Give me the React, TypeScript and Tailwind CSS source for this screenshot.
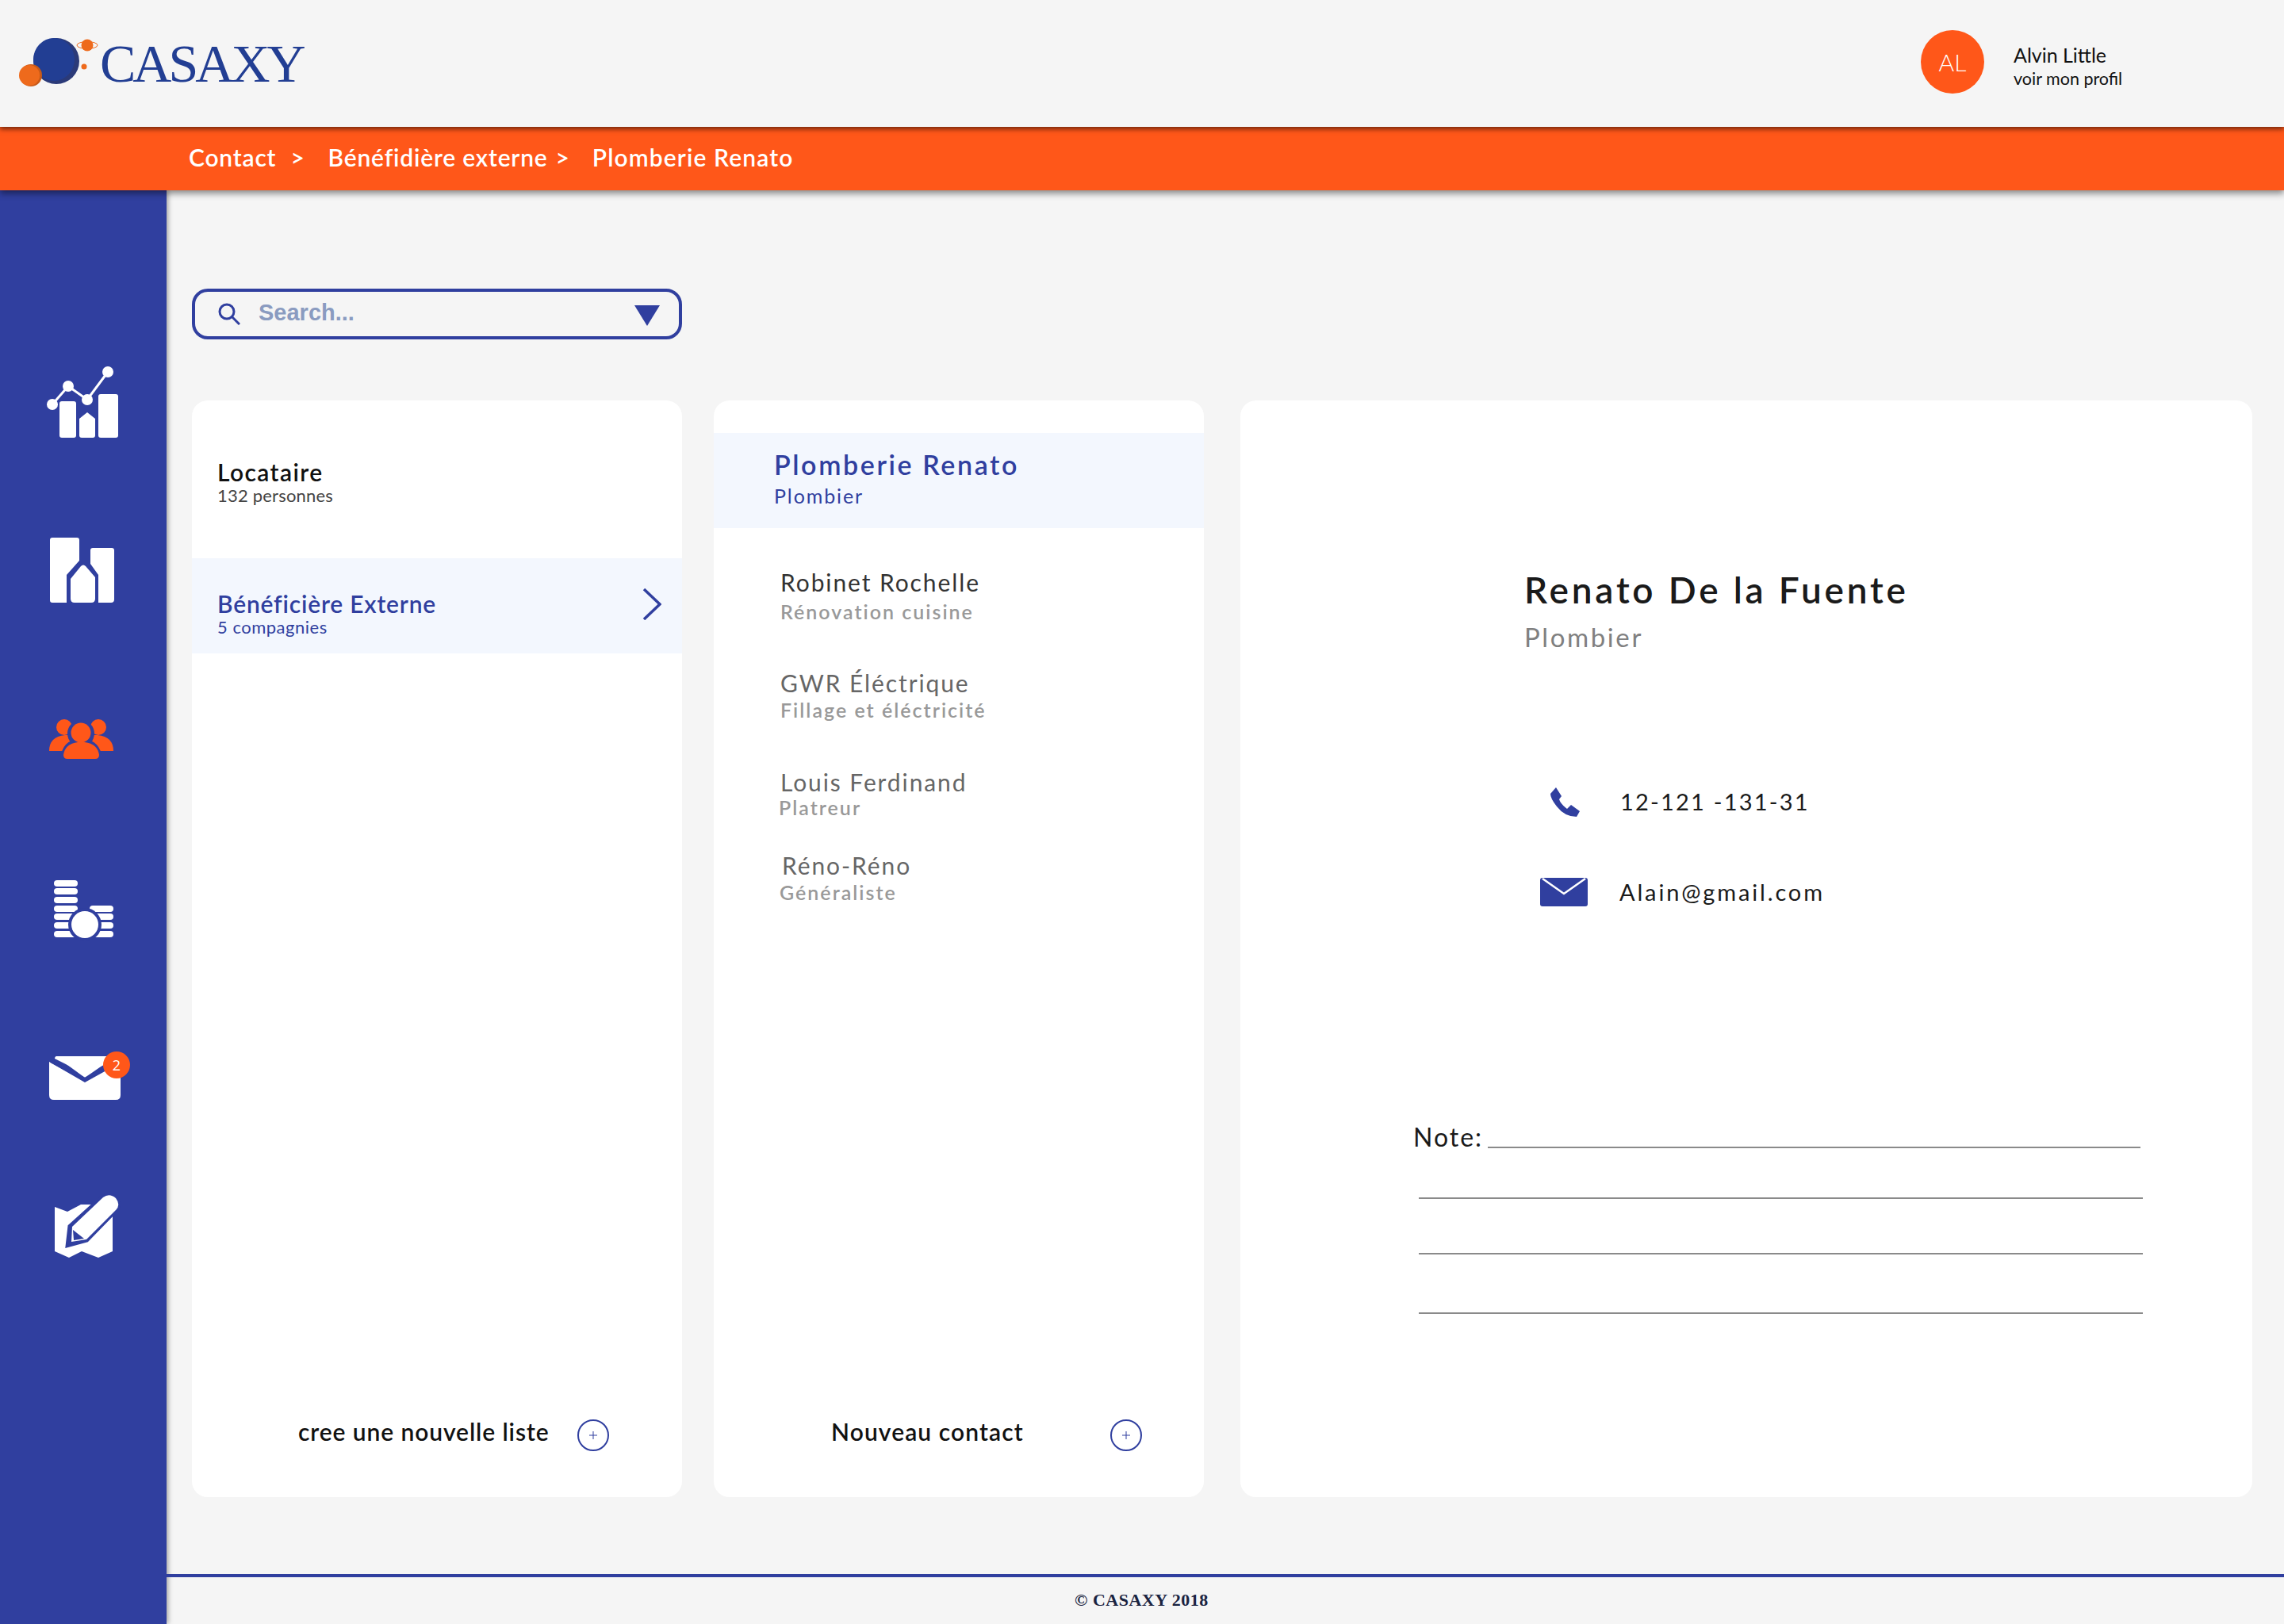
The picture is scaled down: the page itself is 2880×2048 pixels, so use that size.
const sans = "font-['Lato',sans-serif]";

function ChartIcon() {
  return (
    <svg viewBox="50 455 110 110" className="w-[110px] h-[110px]">
      <path d="M66 510 L86 487 L110 504 L136 469" fill="none" stroke="#fff" strokeWidth="3" />
      <ellipse cx="66" cy="510" rx="7" ry="7" fill="#fff" />
      <ellipse cx="86" cy="487" rx="7" ry="7" fill="#fff" />
      <ellipse cx="110" cy="504" rx="7" ry="7" fill="#fff" />
      <ellipse cx="136" cy="469" rx="7" ry="7" fill="#fff" />
      <rect x="75" y="506" width="21" height="46" rx="3" fill="#fff" />
      <path d="M100 528 L110 520 L120 528 V549 Q120 552 117 552 H103 Q100 552 100 549 Z" fill="#fff" />
      <rect x="124" y="497" width="25" height="55" rx="3" fill="#fff" />
    </svg>
  );
}

function BuildingIcon() {
  return (
    <svg viewBox="50 665 110 110" className="w-[110px] h-[110px]">
      <path d="M66 678 H97 Q100 678 100 681 V707 L84 725 V760 H66 Q63 760 63 757 V681 Q63 678 66 678 Z" fill="#fff" />
      <path d="M117 691 H141 Q144 691 144 694 V756 Q144 760 140 760 H124 V725 L114 711 V694 Q114 691 117 691 Z" fill="#fff" />
      <path d="M89 730 L102 714 Q105 711 108 714 L120 728 V755 Q120 760 115 760 H94 Q89 760 89 755 Z" fill="#fff" />
    </svg>
  );
}

function PeopleIcon() {
  return (
    <svg viewBox="50 875 110 110" className="w-[110px] h-[110px]">
      <circle cx="81" cy="917" r="10" fill="#ff5719" />
      <circle cx="124" cy="917" r="10" fill="#ff5719" />
      <path d="M62 947 Q62 929 82 927 H88 L90 947 Z" fill="#ff5719" />
      <path d="M143 947 Q143 929 123 927 H117 L115 947 Z" fill="#ff5719" />
      <circle cx="102" cy="925" r="17" fill="#303f9f" />
      <path d="M76 958 Q78 932 102 932 Q127 932 129 958 Z" fill="#303f9f" />
      <circle cx="102" cy="924" r="12.5" fill="#ff5719" />
      <path d="M80 952 Q82 938 98 936 H107 Q123 938 125 952 Q125 957 120 957 H85 Q80 957 80 952 Z" fill="#ff5719" />
    </svg>
  );
}

function CoinsIcon() {
  const left = [1114, 1124, 1135, 1146, 1156, 1167, 1178];
  const right = [1146, 1156, 1167, 1178];
  return (
    <svg viewBox="50 1090 110 110" className="w-[110px] h-[110px]">
      {left.map((y) => (
        <rect key={y} x="68" y={y - 4} width="30" height="8" rx="4" fill="#fff" />
      ))}
      {right.map((y) => (
        <rect key={y} x="113" y={y - 4} width="30" height="8" rx="4" fill="#fff" />
      ))}
      <circle cx="107" cy="1166" r="21" fill="#303f9f" />
      <circle cx="107" cy="1166" r="17" fill="#fff" />
    </svg>
  );
}

function MailIcon() {
  return (
    <div className="relative w-[110px] h-[110px]">
      <svg viewBox="50 1305 110 110" className="w-[110px] h-[110px]">
        <path d="M62 1339 V1381 Q62 1387 68 1387 H146 Q152 1387 152 1381 V1335 Q152 1332 148 1332 H72 Q69 1332 69 1335 L107 1354 L148 1335 L152 1340 L107 1365 Z" fill="#fff" />
        <path d="M70 1332 H146 L107 1359 Z" fill="#fff" />
        <path d="M64 1338 L107 1361 L150 1338" fill="none" stroke="#303f9f" strokeWidth="4" />
      </svg>
      <span className="absolute left-[80px] top-[21px] w-[34px] h-[34px] rounded-full bg-[#ff5719] text-white text-[18px] leading-[34px] text-center font-['Open_Sans',sans-serif]">
        2
      </span>
    </div>
  );
}

function MapIcon() {
  return (
    <svg viewBox="50 1490 110 110" className="w-[110px] h-[110px]">
      <path d="M69 1522 L85 1528 L102 1519 H120 L142 1530 V1578 L124 1586 L103 1578 L87 1586 L69 1578 Z" fill="#fff" />
      <path d="M128 1509 Q138 1502 147 1510 Q155 1520 146 1528 L110 1565 L84 1572 L87 1546 Z" fill="#303f9f" stroke="#303f9f" strokeWidth="3" />
      <path d="M130 1510 Q138 1504 146 1511 Q153 1520 145 1527 L109 1563 L90 1566 L91 1547 Z" fill="#fff" />
      <path d="M92 1551 L106 1562 L93 1564 Z" fill="#303f9f" />
    </svg>
  );
}

function PlusCircle() {
  return (
    <span className="w-[40px] h-[40px] rounded-full border-2 border-[#303f9f] flex items-center justify-center text-[#303f9f]">
      <svg viewBox="0 0 10 10" className="w-[10px] h-[10px]">
        <path d="M5 0 V10 M0 5 H10" stroke="currentColor" strokeWidth="1" />
      </svg>
    </span>
  );
}

const contacts = [
  { name: "Robinet Rochelle", job: "Rénovation cuisine", nameColor: "text-[#333]", top: "mt-[50px]", gap: "mt-[5px]", nameIndent: "", jobIndent: "" },
  { name: "GWR Éléctrique", job: "Fillage et éléctricité", nameColor: "text-[#666]", top: "mt-[58px]", gap: "mt-[2px]", nameIndent: "", jobIndent: "" },
  { name: "Louis Ferdinand", job: "Platreur", nameColor: "text-[#666]", top: "mt-[59px]", gap: "mt-0", nameIndent: "", jobIndent: "-ml-[2px]" },
  { name: "Réno-Réno", job: "Généraliste", nameColor: "text-[#666]", top: "mt-[41px]", gap: "mt-[2px]", nameIndent: "ml-[2px]", jobIndent: "-ml-[1px]" },
];

export default function App() {
  return (
    <div className={`w-[2880px] h-[2048px] flex flex-col bg-[#f5f5f5] overflow-hidden ${sans}`}>
      <header className="relative z-20 h-[160px] shrink-0 flex items-center justify-between bg-[#f5f5f5] shadow-[0_3px_6px_rgba(0,0,0,0.55)]">
        <div className="flex items-center pl-[24px]">
          <svg viewBox="24 44 102 72" className="w-[102px] h-[72px]">
            <circle cx="71" cy="77" r="29" fill="#2b3a78" />
            <ellipse cx="68" cy="75" rx="26" ry="27" fill="#223e93" />
            <circle cx="39" cy="95" r="14" fill="#c85a18" />
            <circle cx="37" cy="95" r="13" fill="#ee6a1c" />
            <circle cx="110" cy="57" r="7.5" fill="#ee6a1c" />
            <ellipse cx="110" cy="57" rx="13" ry="4.5" fill="none" stroke="#ee6a1c" strokeWidth="1" />
            <circle cx="106" cy="84" r="3.5" fill="#ee6a1c" />
          </svg>
          <span className="text-[68px] leading-none tracking-[-4px] text-[#223e93] font-['Liberation_Serif',serif]">CASAXY</span>
        </div>
        <div className="flex items-center w-[458px]">
          <div className="mb-[4px] w-[80px] h-[80px] rounded-full bg-[#ff5719] text-white text-[30px] font-light flex items-center justify-center">AL</div>
          <div className="ml-[37px] mt-[6px] text-[#111]">
            <div className="text-[25px] leading-[32px]">Alvin Little</div>
            <div className="text-[21.5px] leading-[28px]">voir mon profil</div>
          </div>
        </div>
      </header>

      <nav className="relative z-10 h-[80px] shrink-0 flex items-center pb-[4px] pl-[238px] bg-[#ff5719] text-white text-[30px] font-semibold tracking-[0.8px] shadow-[0_4px_8px_rgba(0,0,0,0.45)]">
        <span>Contact</span>
        <span className="ml-[18px]">&gt;</span>
        <span className="ml-[29px]">Bénéfidière externe</span>
        <span className="ml-[10px]">&gt;</span>
        <span className="ml-[28px] tracking-[1.1px]">Plomberie Renato</span>
      </nav>

      <div className="flex flex-1 min-h-0">
        <aside className="w-[210px] shrink-0 flex flex-col items-center pt-[215px] bg-[#303f9f] shadow-[2px_0_6px_rgba(0,0,0,0.35)]">
          <ChartIcon />
          <div className="mt-[100px]"><BuildingIcon /></div>
          <div className="mt-[100px]"><PeopleIcon /></div>
          <div className="mt-[105px]"><CoinsIcon /></div>
          <div className="mt-[105px]"><MailIcon /></div>
          <div className="mt-[75px]"><MapIcon /></div>
        </aside>

        <div className="flex-1 flex flex-col min-w-0">
          <main className="flex-1 min-h-0 flex flex-col pl-[32px] pr-[40px] pt-[124px]">
            <div className="w-[618px] h-[64px] shrink-0 border-4 border-[#303f9f] rounded-[20px] flex items-center pl-[29px] pr-[24px]">
              <svg viewBox="0 0 28 28" className="w-[28px] h-[28px]" fill="none" stroke="#303f9f" strokeWidth="3">
                <circle cx="11" cy="11" r="9" />
                <path d="M17.5 17.5 L27 27" />
              </svg>
              <span className="ml-[23px] -mt-[2px] flex-1 text-[29px] font-bold text-[#8a9bc0] font-['Liberation_Sans',sans-serif]">Search...</span>
              <svg viewBox="0 0 32 26" className="w-[32px] h-[26px] mt-[4px]">
                <path d="M0 0 H32 L16 26 Z" fill="#303f9f" />
              </svg>
            </div>

            <div className="flex mt-[77px] h-[1383px]">
              <section className="w-[618px] bg-white rounded-[20px] flex flex-col">
                <div className="h-[199px] pl-[32px] pt-[72px]">
                  <div className="text-[30px] leading-[36px] font-semibold tracking-[1.4px] text-[#111]">Locataire</div>
                  <div className="text-[22px] leading-[24px] text-[#444] tracking-[0.2px]">132 personnes</div>
                </div>
                <div className="h-[120px] bg-[#f3f7fe] pl-[32px] pr-[26px] flex items-center justify-between text-[#303f9f]">
                  <div className="pt-[18px]">
                    <div className="text-[30px] leading-[36px] font-semibold tracking-[0.8px]">Bénéficière Externe</div>
                    <div className="text-[22px] leading-[24px] tracking-[0.5px]">5 compagnies</div>
                  </div>
                  <svg viewBox="0 0 24 40" className="w-[24px] h-[40px] -mt-[4px]" fill="none" stroke="#303f9f" strokeWidth="3.5">
                    <path d="M2 1 L22 20 L2 39" />
                  </svg>
                </div>
                <div className="mt-auto h-[98px] flex items-start pl-[134px]">
                  <span className="mt-[-5px] w-[352px] text-[30px] leading-[40px] font-semibold tracking-[0.9px] text-[#111]">cree une nouvelle liste</span>
                  <PlusCircle />
                </div>
              </section>

              <section className="w-[618px] ml-[40px] bg-white rounded-[20px] flex flex-col">
                <div className="mt-[41px] h-[120px] bg-[#f3f7fe] pl-[76px] pt-[19px] text-[#303f9f]">
                  <div className="text-[34px] leading-[42px] font-semibold tracking-[2.6px]">Plomberie Renato</div>
                  <div className="mt-[2px] text-[25px] leading-[32px] tracking-[1.9px]">Plombier</div>
                </div>
                {contacts.map((c) => (
                  <div key={c.name} className={`${c.top} pl-[84px]`}>
                    <div className={`${c.nameIndent} text-[30px] leading-[36px] tracking-[1.9px] ${c.nameColor}`}>{c.name}</div>
                    <div className={`${c.gap} ${c.jobIndent} text-[25px] leading-[28px] font-semibold tracking-[2px] text-[#999]`}>{c.job}</div>
                  </div>
                ))}
                <div className="mt-auto h-[98px] flex items-start pl-[148px]">
                  <span className="mt-[-5px] w-[352px] text-[30px] leading-[40px] font-semibold tracking-[1.1px] text-[#111]">Nouveau contact</span>
                  <PlusCircle />
                </div>
              </section>

              <section className="w-[1276px] ml-[46px] bg-white rounded-[20px] flex flex-col">
                <div className="pl-[358px] pt-[211px]">
                  <h1 className="text-[46px] leading-[56px] font-semibold tracking-[3.8px] text-[#1a1a1a]">Renato De la Fuente</h1>
                  <div className="mt-[11px] text-[33px] leading-[40px] tracking-[2.6px] text-[#808080]">Plombier</div>
                </div>
                <div className="mt-[168px] pl-[378px] flex items-center h-[40px]">
                  <svg viewBox="0 0 37 37" className="w-[37px] h-[37px] ml-[13px]">
                    <path d="M7 0 L14 11 L11 15 Q13 21 21 27 L26 22 L37 30 L33 37 Q18 37 8 24 Q0 14 0 8 Z" fill="#303f9f" />
                  </svg>
                  <span className="ml-[51px] text-[29px] tracking-[2.2px] text-[#1a1a1a]">12-121 -131-31</span>
                </div>
                <div className="mt-[74px] pl-[378px] flex items-center h-[40px]">
                  <svg viewBox="0 0 60 36" className="w-[60px] h-[36px]">
                    <rect width="60" height="36" rx="3" fill="#303f9f" />
                    <path d="M3 1 L30 20 L57 1" fill="none" stroke="#fff" strokeWidth="2.5" />
                  </svg>
                  <span className="ml-[40px] -mt-[1px] text-[29px] tracking-[2.85px] text-[#1a1a1a]">Alain@gmail.com</span>
                </div>
                <div className="mt-[277px] pl-[218px] flex items-end">
                  <span className="mb-[2px] text-[32px] leading-[24px] tracking-[2px] text-[#1a1a1a]">Note:</span>
                  <span className="ml-[6px] w-[823px] border-b-2 border-[#8a8a8a]" />
                </div>
                <div className="ml-[225px] mt-[62px] w-[913px] border-b-2 border-[#8a8a8a]" />
                <div className="ml-[225px] mt-[68px] w-[913px] border-b-2 border-[#8a8a8a]" />
                <div className="ml-[225px] mt-[73px] w-[913px] border-b-2 border-[#8a8a8a]" />
              </section>
            </div>
          </main>

          <footer className="h-[63px] shrink-0 border-t-4 border-[#303f9f] flex items-center pb-[2px] pl-[1145px] text-[22px] font-bold tracking-[0.5px] text-[#1a2340] font-['Liberation_Serif',serif]">
            © CASAXY 2018
          </footer>
        </div>
      </div>
    </div>
  );
}
